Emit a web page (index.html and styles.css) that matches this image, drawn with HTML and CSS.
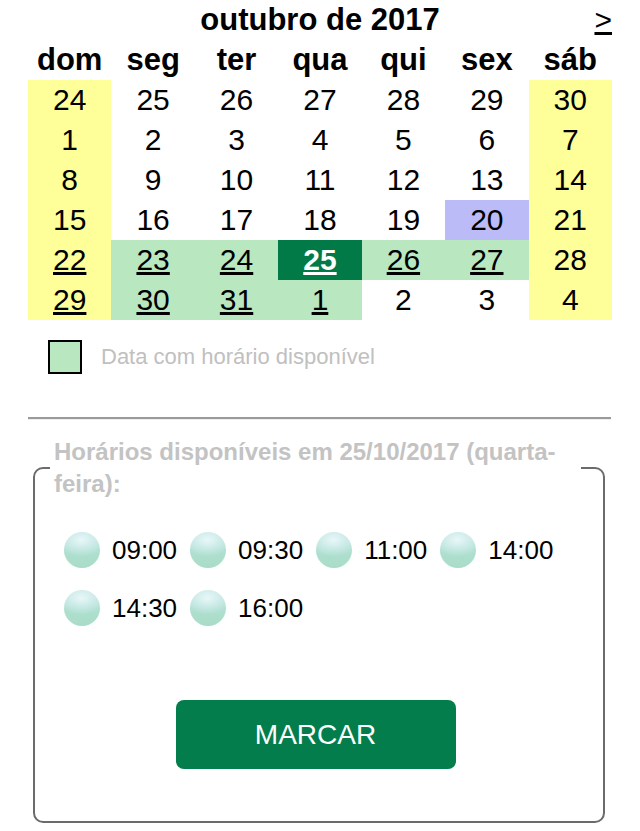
FILE: index.html
```html
<!DOCTYPE html>
<html lang="pt">
<head>
<meta charset="utf-8">
<title>Agenda</title>
<link rel="stylesheet" href="styles.css">
</head>
<body>
<div class="page">
  <div class="title-row">
    <span></span>
    <span class="month">outubro de 2017</span>
    <a class="next" href="#">&gt;</a>
  </div>
  <table class="cal">
    <thead>
      <tr><th>dom</th><th>seg</th><th>ter</th><th>qua</th><th>qui</th><th>sex</th><th>sáb</th></tr>
    </thead>
    <tbody>
      <tr><td class="we">24</td><td>25</td><td>26</td><td>27</td><td>28</td><td>29</td><td class="we">30</td></tr>
      <tr><td class="we">1</td><td>2</td><td>3</td><td>4</td><td>5</td><td>6</td><td class="we">7</td></tr>
      <tr><td class="we">8</td><td>9</td><td>10</td><td>11</td><td>12</td><td>13</td><td class="we">14</td></tr>
      <tr><td class="we">15</td><td>16</td><td>17</td><td>18</td><td>19</td><td class="today">20</td><td class="we">21</td></tr>
      <tr><td class="we"><a href="#">22</a></td><td class="av"><a href="#">23</a></td><td class="av"><a href="#">24</a></td><td class="sel"><a href="#">25</a></td><td class="av"><a href="#">26</a></td><td class="av"><a href="#">27</a></td><td class="we">28</td></tr>
      <tr><td class="we"><a href="#">29</a></td><td class="av"><a href="#">30</a></td><td class="av"><a href="#">31</a></td><td class="av"><a href="#">1</a></td><td>2</td><td>3</td><td class="we">4</td></tr>
    </tbody>
  </table>
  <div class="legend-row">
    <span class="legend-box"></span>
    <span class="legend-text">Data com horário disponível</span>
  </div>
  <hr class="sep">
  <fieldset class="slots">
    <legend>Horários disponíveis em 25/10/2017 (quarta-feira):</legend>
    <div class="times">
      <label class="slot"><span class="radio"></span><span>09:00</span></label>
      <label class="slot"><span class="radio"></span><span>09:30</span></label>
      <label class="slot"><span class="radio"></span><span>11:00</span></label>
      <label class="slot"><span class="radio"></span><span>14:00</span></label>
      <label class="slot"><span class="radio"></span><span>14:30</span></label>
      <label class="slot"><span class="radio"></span><span>16:00</span></label>
    </div>
    <div class="actions">
      <button class="btn" type="button">MARCAR</button>
    </div>
  </fieldset>
</div>
</body>
</html>
```
FILE: styles.css
```css
html, body {
  margin: 0;
  padding: 0;
  background: #fff;
}
body {
  font-family: "Liberation Sans", Arial, Helvetica, sans-serif;
  color: #000;
}
.page {
  padding: 0 28px;
}
.title-row {
  display: grid;
  grid-template-columns: 1fr auto 1fr;
  align-items: center;
  height: 40px;
  width: 584px;
}
.month {
  font-size: 31px;
  font-weight: bold;
}
.next {
  justify-self: end;
  font-size: 30px;
  color: #000;
  text-decoration: underline;
}
.cal {
  width: 584px;
  table-layout: fixed;
  border-collapse: collapse;
  border-spacing: 0;
}
.cal th, .cal td {
  height: 40px;
  padding: 0;
  text-align: center;
  vertical-align: middle;
  font-size: 30px;
  line-height: 40px;
}
.cal th {
  font-weight: bold;
  font-size: 31px;
}
.cal a {
  color: #000;
  text-decoration: underline;
}
.cal .we {
  background: #ffff99;
}
.cal .av {
  background: #b8e7c0;
}
.cal .today {
  background: #bbbbf8;
}
.cal .sel {
  background: #027a48;
}
.cal .sel a {
  color: #fff;
  font-weight: bold;
}
.legend-row {
  display: flex;
  align-items: center;
  gap: 19px;
  margin-top: 20px;
  padding-left: 20px;
}
.legend-box {
  width: 34px;
  height: 34px;
  box-sizing: border-box;
  border: 2px solid #000;
  background: #b8e7c0;
}
.legend-text {
  font-size: 22px;
  color: #c0c0c0;
}
.sep {
  width: 583px;
  margin: 43px 0 0 0;
  border: 0;
  border-top: 2px solid #9a9a9a;
  border-bottom: 1px solid #eeeeee;
  height: 0;
}
.slots {
  margin: 16px 7px 0 5px;
  padding: 0 22px 52px 15px;
  border: 2px solid #6b6b6b;
  border-radius: 10px;
  min-width: 0;
}
.slots legend {
  padding: 0 4px;
  font-size: 24px;
  line-height: 32px;
  font-weight: bold;
  color: #c3c3c3;
}
.times {
  display: flex;
  flex-wrap: wrap;
  column-gap: 13px;
  row-gap: 22px;
  padding: 32px 0 0 14px;
}
.slot {
  display: flex;
  align-items: center;
  gap: 12px;
  font-size: 26px;
}
.radio {
  width: 36px;
  height: 36px;
  border-radius: 50%;
  flex: none;
  background:
    radial-gradient(ellipse 70% 45% at 48% 22%, rgba(235, 248, 250, 0.95) 0%, rgba(210, 238, 238, 0.7) 55%, rgba(200, 235, 230, 0) 100%),
    linear-gradient(180deg, #c6e9e4 0%, #b0e0d0 50%, #a9dcc8 100%);
}
.actions {
  display: flex;
  justify-content: center;
  padding-top: 74px;
}
.btn {
  width: 280px;
  height: 69px;
  border: 0;
  border-radius: 8px;
  background: #027d4b;
  color: #fff;
  font-family: "Liberation Sans", Arial, Helvetica, sans-serif;
  font-size: 28px;
}
```
